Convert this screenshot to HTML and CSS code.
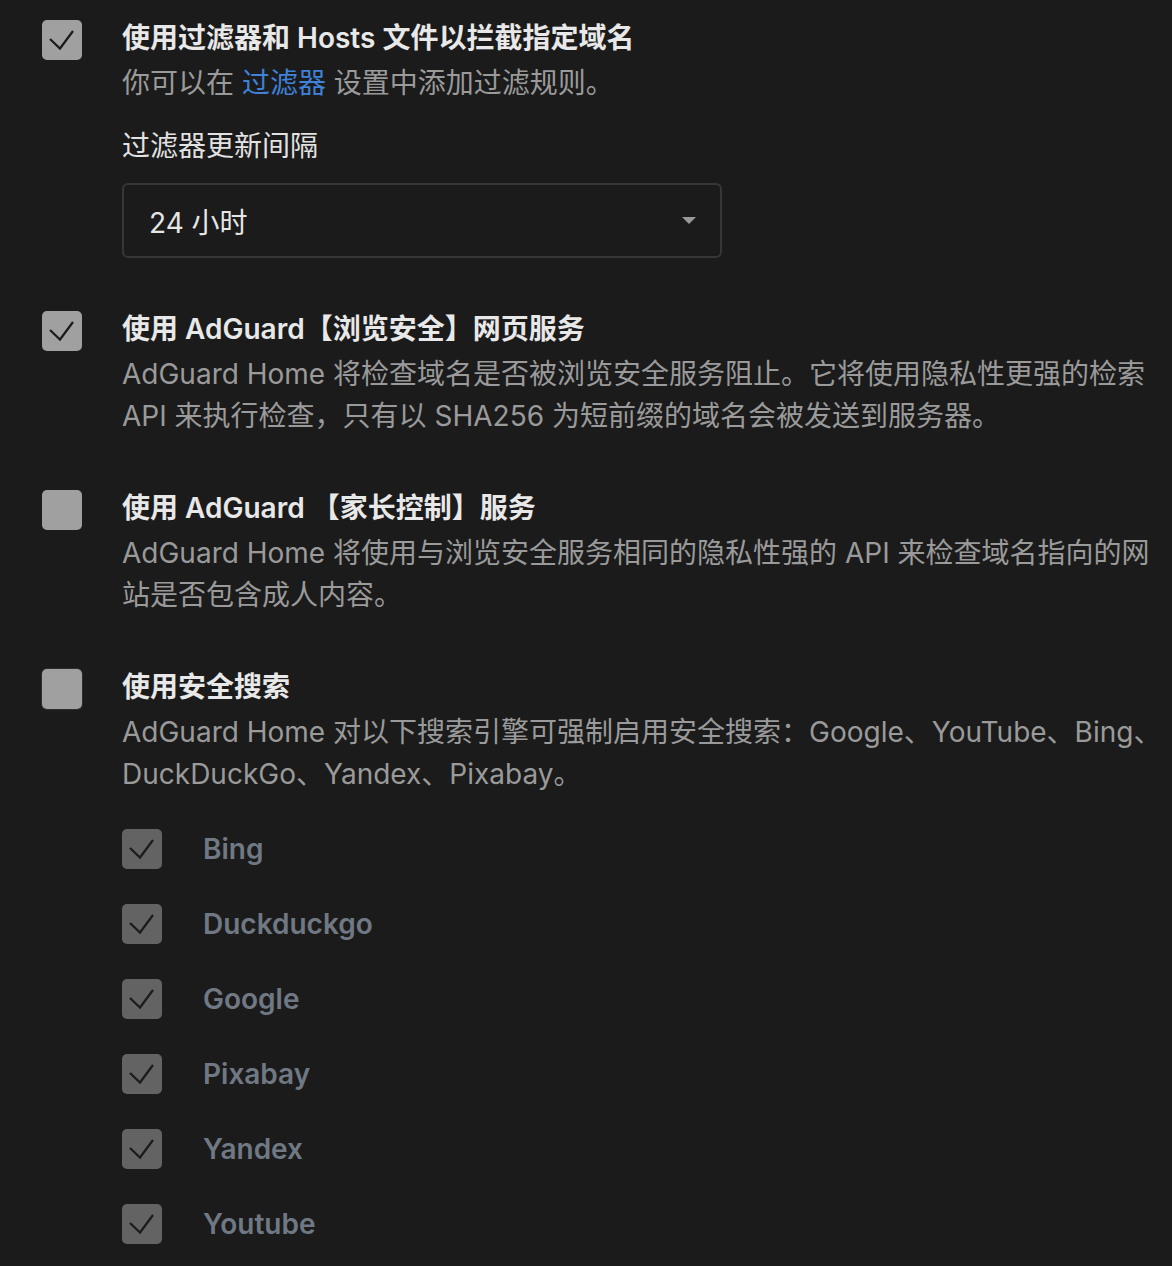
FILE: index.html
```html
<!DOCTYPE html>
<html lang="zh-CN">
<head>
<meta charset="utf-8">
<title>设置</title>
<link rel="stylesheet" href="styles.css">
</head>
<body>
<div class="page">
  <div class="item">
    <span class="cb on"><svg viewBox="0 0 40 40" width="40" height="40"><path d="M8 19 L18 28.5 L31 11" fill="none" stroke="#1b1b1b" stroke-width="2.2"/></svg></span>
    <div class="content">
      <div class="title">使用过滤器和 Hosts 文件以拦截指定域名</div>
      <div class="desc">你可以在 <a class="link" href="#">过滤器</a> 设置中添加过滤规则。</div>
      <div class="label">过滤器更新间隔</div>
      <div class="select"><span class="select-value">24 小时</span><span class="arrow"></span></div>
    </div>
  </div>

  <div class="item">
    <span class="cb on"><svg viewBox="0 0 40 40" width="40" height="40"><path d="M8 19 L18 28.5 L31 11" fill="none" stroke="#1b1b1b" stroke-width="2.2"/></svg></span>
    <div class="content">
      <div class="title">使用 AdGuard【浏览安全】网页服务</div>
      <div class="desc">AdGuard Home 将检查域名是否被浏览安全服务阻止。它将使用隐私性更强的检索 API 来执行检查，只有以 SHA256 为短前缀的域名会被发送到服务器。</div>
    </div>
  </div>

  <div class="item">
    <span class="cb"></span>
    <div class="content">
      <div class="title">使用 AdGuard 【家长控制】服务</div>
      <div class="desc">AdGuard Home 将使用与浏览安全服务相同的隐私性强的 API 来检查域名指向的网站是否包含成人内容。</div>
    </div>
  </div>

  <div class="item">
    <span class="cb edge"></span>
    <div class="content">
      <div class="title">使用安全搜索</div>
      <div class="desc">AdGuard Home 对以下搜索引擎可强制启用安全搜索：Google、YouTube、Bing、DuckDuckGo、Yandex、Pixabay。</div>
      <div class="subs">
        <div class="sub"><span class="cb dim"><svg viewBox="0 0 40 40" width="40" height="40"><path d="M8 19 L18 28.5 L31 11" fill="none" stroke="#1b1b1b" stroke-width="2.2"/></svg></span><span class="sub-label">Bing</span></div>
        <div class="sub"><span class="cb dim"><svg viewBox="0 0 40 40" width="40" height="40"><path d="M8 19 L18 28.5 L31 11" fill="none" stroke="#1b1b1b" stroke-width="2.2"/></svg></span><span class="sub-label">Duckduckgo</span></div>
        <div class="sub"><span class="cb dim"><svg viewBox="0 0 40 40" width="40" height="40"><path d="M8 19 L18 28.5 L31 11" fill="none" stroke="#1b1b1b" stroke-width="2.2"/></svg></span><span class="sub-label">Google</span></div>
        <div class="sub"><span class="cb dim"><svg viewBox="0 0 40 40" width="40" height="40"><path d="M8 19 L18 28.5 L31 11" fill="none" stroke="#1b1b1b" stroke-width="2.2"/></svg></span><span class="sub-label">Pixabay</span></div>
        <div class="sub"><span class="cb dim"><svg viewBox="0 0 40 40" width="40" height="40"><path d="M8 19 L18 28.5 L31 11" fill="none" stroke="#1b1b1b" stroke-width="2.2"/></svg></span><span class="sub-label">Yandex</span></div>
        <div class="sub"><span class="cb dim"><svg viewBox="0 0 40 40" width="40" height="40"><path d="M8 19 L18 28.5 L31 11" fill="none" stroke="#1b1b1b" stroke-width="2.2"/></svg></span><span class="sub-label">Youtube</span></div>
      </div>
    </div>
  </div>
</div>
</body>
</html>
```

FILE: styles.css
```css
html, body {
  margin: 0;
  padding: 0;
  background: #1b1b1b;
}
body {
  font-family: Inter, "Noto Sans CJK SC", sans-serif;
  font-size: 28px;
  color: #e6e6e6;
}
.page {
  padding: 17px 0 0 42px;
  display: flex;
  flex-direction: column;
  gap: 50px;
}
.item {
  display: flex;
  align-items: flex-start;
}
.cb {
  flex: 0 0 auto;
  width: 40px;
  height: 40px;
  margin-top: 3px;
  border-radius: 5px;
  background: #a0a0a0;
  box-sizing: border-box;
  display: block;
}
.cb svg {
  display: block;
}
.cb.edge {
  box-shadow: 0 0 0 1px #2e2e2e;
}
.cb.dim {
  background: #636363;
  margin-top: 0;
}
.content {
  margin-left: 40px;
  flex: 1 1 auto;
  min-width: 0;
}
.title {
  line-height: 42px;
  font-weight: 600;
  color: #e8e8e8;
}
.desc {
  margin-top: 3px;
  line-height: 42px;
  color: #9a9a9a;
}
.link {
  color: #3f82d8;
  text-decoration: none;
}
.label {
  margin-top: 21px;
  line-height: 42px;
  color: #e2e2e2;
}
.select {
  margin-top: 16px;
  width: 600px;
  height: 75px;
  box-sizing: border-box;
  border: 2px solid #373737;
  border-radius: 6px;
  padding: 0 24px 0 25px;
  display: flex;
  align-items: center;
  justify-content: space-between;
}
.select-value {
  color: #e6e6e6;
}
.arrow {
  width: 0;
  height: 0;
  border-left: 7px solid transparent;
  border-right: 7px solid transparent;
  border-top: 7px solid #999999;
}
.subs {
  margin-top: 34px;
  margin-left: -80px;
  padding-left: 80px;
  display: flex;
  flex-direction: column;
  gap: 35px;
}
.sub {
  display: flex;
  align-items: center;
  height: 40px;
}
.sub-label {
  margin-left: 41px;
  font-weight: 600;
  color: #707983;
}
```
